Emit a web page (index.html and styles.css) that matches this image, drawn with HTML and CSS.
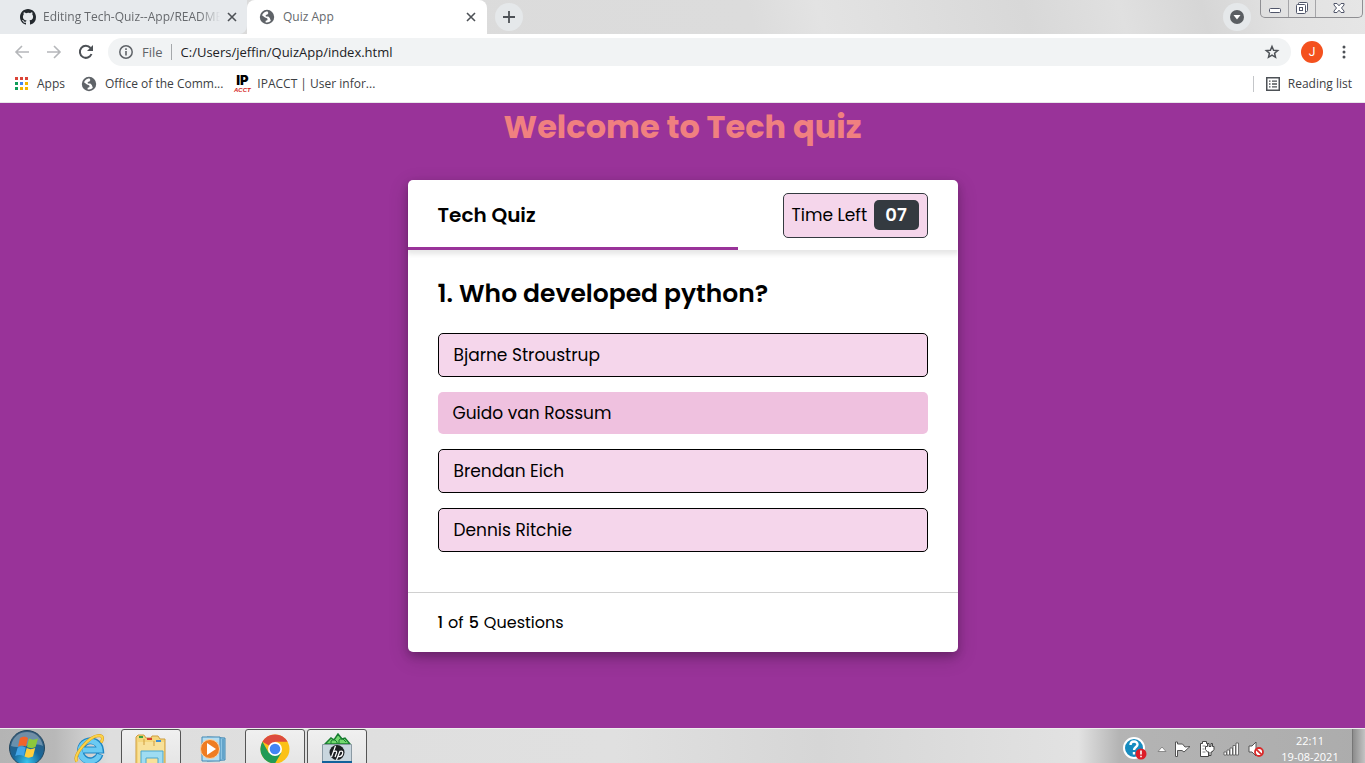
FILE: index.html
```html
<!DOCTYPE html>
<html lang="en">
<head>
<meta charset="utf-8">
<meta name="viewport" content="width=device-width, initial-scale=1">
<title>Quiz App</title>
<link rel="stylesheet" href="styles.css">
</head>
<body>
<svg class="defs" aria-hidden="true">
  <symbol id="globe" viewBox="0 0 16 16"><circle cx="8" cy="8" r="7.2" fill="#5f6368"/><path d="M8.3 2.2c-2.4.4-4.3 1.700-5.300 4L6 8.600c1 .2 1.800.4 2.600 1.300l-.3 1.400-1.600.4-.2 1.500c2 .6 4-.1 5.300-1.400l-1-2.700-1.500-1.600H6.900L6.700 6l1.700-.5 1-1.500z" fill="#fff"/></symbol>
  <symbol id="cross" viewBox="0 0 10 10"><path d="M1 1l8 8M9 1l-8 8" stroke="#4d5156" stroke-width="1.600"/></symbol>
</svg>

<header class="browser">
  <div class="tabs">
    <div class="tab tab-back">
      <svg class="icon16" viewBox="0 0 16 16"><path fill="#24292e" d="M8 0C3.580 0 0 3.580 0 8c0 3.540 2.290 6.530 5.470 7.590.4.070.55-.17.55-.38 0-.19-.01-.82-.01-1.490-2.010.37-2.530-.49-2.690-.94-.09-.23-.48-.94-.82-1.130-.28-.15-.68-.52-.01-.53.63-.01 1.080.58 1.230.82.72 1.210 1.870.87 2.330.66.070-.52.28-.87.51-1.070-1.780-.2-3.640-.89-3.640-3.950 0-.87.31-1.590.82-2.150-.08-.2-.36-1.020.08-2.120 0 0 .67-.21 2.200.82A7.600 7.600 0 0 1 8 3.860c.68 0 1.360.09 2 .27 1.530-1.040 2.200-.82 2.200-.82.44 1.100.16 1.920.08 2.120.51.56.82 1.270.82 2.150 0 3.070-1.870 3.750-3.650 3.950.29.25.54.73.54 1.480 0 1.070-.01 1.930-.01 2.200 0 .21.15.46.55.38A8 8 0 0 0 16 8c0-4.420-3.580-8-8-8z"/></svg>
      <span class="tab-title fade">Editing Tech-Quiz--App/README</span>
      <button class="plain" aria-label="Close tab"><svg class="icon10"><use href="#cross"/></svg></button>
    </div>
    <div class="tab tab-front">
      <svg class="icon16"><use href="#globe"/></svg>
      <span class="tab-title">Quiz App</span>
      <button class="plain" aria-label="Close tab"><svg class="icon10"><use href="#cross"/></svg></button>
    </div>
    <button class="plain round" aria-label="New tab"><svg class="icon14" viewBox="0 0 14 14"><path d="M7 1v12M1 7h12" stroke="#4d5156" stroke-width="1.800"/></svg></button>
    <div class="tabs-end">
      <button class="plain round" aria-label="Search tabs"><svg class="icon14" viewBox="0 0 14 14"><circle cx="7" cy="7" r="7" fill="#5a5e62"/><path d="M3.500 5h7L7 9.500z" fill="#fff"/></svg></button>
      <div class="window-buttons">
        <button class="plain" aria-label="Minimize"><svg width="14" height="14" viewBox="0 0 14 14"><rect x="1.500" y="6.500" width="11" height="4" rx="1" fill="#fff" stroke="#50566a"/></svg></button>
        <button class="plain" aria-label="Restore"><svg width="14" height="14" viewBox="0 0 14 14"><g fill="#fff" stroke="#50566a"><rect x="3.500" y=".5" width="9" height="9" rx="1"/><rect x="1.500" y="2.500" width="9" height="9" rx="1"/><rect x="4.500" y="5.500" width="3" height="3"/></g></svg></button>
        <button class="plain" aria-label="Close"><svg width="14" height="14" viewBox="0 0 14 14"><path d="M2 1.500h3l2 2.300 2-2.300h3V3L9.500 6l2.500 3v1.500H9L7 8.200 5 10.500H2V9l2.500-3L2 3z" fill="#fff" stroke="#50566a"/></svg></button>
      </div>
    </div>
  </div>

  <div class="toolbar">
    <button class="plain" aria-label="Back"><svg class="icon16" viewBox="0 0 16 16"><path d="M15 8H2M8 2L2 8l6 6" fill="none" stroke="#b5b7ba" stroke-width="1.600"/></svg></button>
    <button class="plain" aria-label="Forward"><svg class="icon16" viewBox="0 0 16 16"><path d="M1 8h13M8 2l6 6-6 6" fill="none" stroke="#b5b7ba" stroke-width="1.600"/></svg></button>
    <button class="plain" aria-label="Reload"><svg class="icon16" viewBox="0 0 16 16"><path d="M13.500 10A6 6 0 1 1 12.500 4" fill="none" stroke="#4d5156" stroke-width="2"/><path d="M15 1v6H9z" fill="#4d5156"/></svg></button>
    <div class="address">
      <svg class="icon14" viewBox="0 0 14 14"><circle cx="7" cy="7" r="6.200" fill="none" stroke="#5f6368" stroke-width="1.500"/><path d="M7 6v4.500M7 3.300v1.600" stroke="#5f6368" stroke-width="1.600"/></svg>
      <label class="scheme" for="url">File</label>
      <input id="url" class="url" type="text" value="C:/Users/jeffin/QuizApp/index.html">
      <button class="plain" aria-label="Bookmark"><svg class="icon16" viewBox="0 0 16 16"><path d="M8 2.500l1.600 3.800 4.100.3-3.100 2.700.9 4L8 11.200l-3.500 2.100.9-4-3.100-2.700 4.100-.3z" fill="none" stroke="#4d5156" stroke-width="1.500"/></svg></button>
    </div>
    <button class="plain avatar" aria-label="Profile">J</button>
    <button class="plain" aria-label="Menu"><svg class="icon16" viewBox="0 0 16 16"><g fill="#4d5156"><circle cx="8" cy="3" r="1.500"/><circle cx="8" cy="8" r="1.500"/><circle cx="8" cy="13" r="1.500"/></g></svg></button>
  </div>

  <nav class="bookmarks">
    <a href="#" class="mark"><svg class="icon14" viewBox="0 0 14 14"><path fill="#db4437" d="M0 0h3v3H0zM5 0h3v3H5zM10 0h3v3h-3z"/><path fill="#0f9d58" d="M0 5h3v3H0zM0 10h3v3H0z"/><path fill="#4285f4" d="M5 5h3v3H5z"/><path fill="#f4b400" d="M10 5h3v3h-3zM5 10h3v3H5zM10 10h3v3h-3z"/></svg><span>Apps</span></a>
    <a href="#" class="mark"><svg class="icon16"><use href="#globe"/></svg><span>Office of the Comm...</span></a>
    <a href="#" class="mark ipacct"><span class="ip-logo"><b>IP</b><i>ACCT</i></span><span>IPACCT | User infor...</span></a>
    <a href="#" class="mark reading"><svg class="icon14" viewBox="0 0 14 14"><rect x=".75" y=".75" width="12.500" height="12.500" fill="none" stroke="#4d5156" stroke-width="1.500"/><path d="M3 4.200h1.500M6 4.200h5M3 7h1.500M6 7h5M3 9.800h1.500M6 9.800h5" stroke="#4d5156" stroke-width="1.300"/></svg><span>Reading list</span></a>
  </nav>
</header>

<main class="page">
  <h1 class="welcome">Welcome to Tech quiz</h1>
  <section class="quiz">
    <header class="quiz-head">
      <h2 class="quiz-title">Tech Quiz</h2>
      <div class="timer"><span>Time Left</span><span class="seconds">07</span></div>
      <div class="time-line"></div>
    </header>
    <div class="quiz-body">
      <h3 class="question">1. Who developed python?</h3>
      <div class="options">
        <button class="option">Bjarne Stroustrup</button>
        <button class="option hovered">Guido van Rossum</button>
        <button class="option">Brendan Eich</button>
        <button class="option">Dennis Ritchie</button>
      </div>
    </div>
    <footer class="quiz-foot"><b>1</b><span>of</span><b>5</b><span>Questions</span></footer>
  </section>
</main>

<footer class="taskbar">
  <button class="plain start" aria-label="Start"><svg width="38" height="38" viewBox="0 0 38 38"><defs><radialGradient id="orb" cx=".5" cy=".9" r=".8"><stop offset="0" stop-color="#35c5ee"/><stop offset=".5" stop-color="#17679b"/><stop offset="1" stop-color="#345d7e"/></radialGradient></defs><circle cx="19" cy="19" r="17.500" fill="url(#orb)" stroke="#23465e"/><path d="M3 17C5 7 12 3 19 3s14 4 16 14c-10-5-22 4-32 0z" fill="#fff" opacity=".3"/><path d="M12 9c3-2 6-1.500 8 0l-2 8.500c-3-1.500-5-1.500-8 0z" fill="#f0642b"/><path d="M21 9.500c3 1.500 5 1.500 9 0l-2.500 8.500c-3 1.500-5 1.500-8.500 0z" fill="#8cc83c"/><path d="M9.700 18.500c3-1.500 5-1.500 8 0l-2 8.500c-3-1.500-6-1.500-8.500 0z" fill="#42a5e8"/><path d="M18.700 19c3 1.500 5 1.500 8.500 0L25 27.500c-3 1.500-6 1.500-8.500 0z" fill="#ffce3c"/></svg></button>
  <button class="plain task" aria-label="Internet Explorer"><svg width="32" height="32" viewBox="0 0 32 32"><g fill="none"><path d="M26 21A10 10 0 1 1 26.500 17H9" stroke="#1f86c4" stroke-width="7"/><path d="M25.500 21.500A10 10 0 1 1 26 17H9" stroke="#6bcaf2" stroke-width="5"/><path d="M3 28.500C-2 23 15 3 25 2.500c4.500 0 4 4 2 7" stroke="#d99a14" stroke-width="3"/><path d="M3 28.500C-2 23 15 3 25 2.500c4.500 0 4 4 2 7" stroke="#fbd34a" stroke-width="2"/></g></svg></button>
  <button class="plain task open" aria-label="Explorer"><svg width="34" height="32" viewBox="0 0 34 32"><path d="M2 4l2-2h6l2 3h5l1-2h6l2 3h5v25H2z" fill="#f4d67c" stroke="#cf9d3f"/><path d="M4 9h26v22H4z" fill="#f8e19a"/><path d="M10 6v6M20 8v5" stroke="#cf9d3f"/><path d="M5 3h4v2H5z" fill="#37a044"/><path d="M13 5h5v2h-5z" fill="#d8402d"/><path d="M22 7h5v2h-5z" fill="#3c8ed4"/><path d="M7 32V18h22v14h-5v-7H12v7z" fill="#9edcf2" stroke="#4ba6cd"/></svg></button>
  <button class="plain task" aria-label="Media Player"><svg width="28" height="28" viewBox="0 0 28 28"><path d="M8 2l18 1v22L8 26z" fill="#8cc5e4" stroke="#4389b5"/><path d="M3 2h18v24H3z" fill="#b5def2" stroke="#4389b5"/><path d="M24 4v20" stroke="#3d83b0"/><circle cx="11" cy="14" r="9.500" fill="#ef7d22" stroke="#fbd1a2"/><path d="M8 8l9 6-9 6z" fill="#fff"/></svg></button>
  <button class="plain task open" aria-label="Chrome"><svg width="30" height="30" viewBox="0 0 30 30"><circle cx="15" cy="15" r="14.500" fill="#fbc116"/><path d="M15 15L2.440 7.750A14.500 14.500 0 0 1 27.560 7.750H15z" fill="#dd4b3e"/><path d="M2.440 7.750A14.500 14.500 0 0 0 15 29.500l6.280-10.870L15 15l-6.280 3.630z" fill="#219b55"/><circle cx="15" cy="15" r="7" fill="#fff"/><circle cx="15" cy="15" r="5.300" fill="#4285f4"/></svg></button>
  <button class="plain task open hp" aria-label="HP"><svg width="32" height="32" viewBox="0 0 32 32"><path d="M4 11l6-6 3 2 4-6 4 5 3-1 5 6z" fill="#74d96f" stroke="#187d31" stroke-width="1.500"/><path d="M10 11V8l3-2 3 3v2M18 11V7l3-2 4 4" fill="none" stroke="#187d31"/><path d="M1.500 11.500h29V29h-29z" fill="#c9d6de" stroke="#8b9aa4"/><path d="M1 28h30v4H1z" fill="#11629b"/><circle cx="16" cy="19.500" r="7.500" fill="#1c1f22"/><path d="M14.500 13l-4 11M12.500 18.500c3-1 3.500 0 3 1.500L14 24M19 18l-3.500 9M18.500 18.500c3.500-1 3.500.5 3 2.500s-1.500 3-4.500 2.500" stroke="#fff" stroke-width="1.200" fill="none"/></svg></button>
  <div class="tray">
    <svg class="help" width="24" height="24" viewBox="0 0 24 24"><circle cx="11" cy="11" r="10" fill="#168bbf" stroke="#fff" stroke-width="2"/><path d="M7.500 8c0-4.500 7-4.500 7-.5 0 2.500-3.500 2.500-3.500 5.500M11 15v2.500" fill="none" stroke="#fff" stroke-width="2.400"/><circle cx="18" cy="17" r="5.500" fill="#dc1d28"/><path d="M18 13.500v4M18 18.800v1.500" stroke="#fff" stroke-width="1.600"/></svg>
    <svg width="10" height="16" viewBox="0 0 10 16"><path d="M1 10.500l4-4.500 4 4.500z" fill="#fff" stroke="#777" stroke-width=".8"/></svg>
    <svg width="16" height="16" viewBox="0 0 16 16"><path d="M.5 1v14.500h2V9.500H7l2 1.500 6-5.500-5 .5L7.500 3h-5V1z" fill="#fff" stroke="#555"/></svg>
    <svg width="16" height="16" viewBox="0 0 16 16"><path d="M3.500.5h4v2h2v13h-8v-13h2z" fill="#fff" stroke="#444"/><path d="M3.500 5h3M3.500 8h2M3.500 11h3" stroke="#888"/><path d="M8.500 2.500v3h-2v3l2 2.500h1.500v3.500H12V11h1l2-2.500v-3h-1.500v-3H12v3h-2v-3z" fill="#fff" stroke="#444"/></svg>
    <svg width="17" height="16" viewBox="0 0 17 16"><path d="M1 11h2.500v3H1zM4 9h2.500v5H4zM7 7h2.500v7H7zM10 4.500h2.500V14H10zM13 2h2.500v12H13z" fill="#fff" stroke="#555" stroke-width=".8"/></svg>
    <svg width="16" height="16" viewBox="0 0 16 16"><path d="M1 5h3l4-4v14l-4-4H1z" fill="#fff" stroke="#555"/><circle cx="11" cy="11" r="4" fill="#fff" stroke="#d92a2a" stroke-width="1.800"/><path d="M8.300 8.300l5.400 5.400" stroke="#d92a2a" stroke-width="1.800"/></svg>
  </div>
  <div class="clock"><time>22:11</time><time>19-08-2021</time></div>
  <button class="plain show-desktop" aria-label="Show desktop"></button>
</footer>
</body>
</html>
```

FILE: styles.css
```css
* { box-sizing: border-box; }

body {
  margin: 0;
  height: 100vh;
  display: flex;
  flex-direction: column;
  overflow: hidden;
  font: 12px/16px "Segoe UI", "Open Sans", sans-serif;
  color: #3c4043;
}

svg { display: block; flex: none; }
.defs { position: absolute; width: 0; height: 0; }
.icon16 { width: 16px; height: 16px; }
.icon14 { width: 14px; height: 14px; }
.icon10 { width: 10px; height: 10px; }

.plain {
  display: flex;
  align-items: center;
  justify-content: center;
  flex: none;
  padding: 0;
  border: 0;
  background: none;
  font: inherit;
  color: inherit;
}

/* Browser window */
.browser { flex: none; background: #fff; border-bottom: 1px solid #e8e6ea; }

.tabs {
  display: flex;
  height: 34px;
  background: linear-gradient(75deg, #dadada 0%, #dcdcdc 55%, #e3e3e3 60%, #d8d8d8 75%, #e0e0e0 82%, #d6d6d6 88%, #e2e2e2 94%, #e6e6e6 100%);
}
.tab { display: flex; align-items: center; gap: 8px; padding: 0 10px 0 20px; }
.tab-back { width: 247px; gap: 7px; background: #e7eaed; border-radius: 0 0 8px 0; }
.tab-front { width: 240px; padding: 0 11px 0 12px; background: #fff; border-radius: 8px 8px 0 0; }
.tab-title { flex: 1; overflow: hidden; white-space: nowrap; color: #66696d; }
.fade { mask-image: linear-gradient(to right, #000 88%, transparent); }
.round { width: 28px; height: 28px; margin: 3px 8px; border-radius: 50%; background: #e5e8ea; }
.tabs-end { display: flex; align-items: flex-start; margin-left: auto; }
.window-buttons {
  display: flex;
  height: 18px;
  margin-right: 2px;
  border: 1px solid #8f8f93;
  border-top: 0;
  border-radius: 0 0 5px 5px;
}
.window-buttons .plain { width: 27px; }
.window-buttons .plain + .plain { border-left: 1px solid #a5a5a8; }
.window-buttons .plain:last-child { width: 47px; }
.tabs-end .round { margin-right: 9px; }

.toolbar { display: flex; align-items: center; gap: 16px; height: 36px; padding: 0 13px 0 14px; }
.address {
  display: flex;
  align-items: center;
  flex: 1;
  gap: 9px;
  height: 28px;
  margin: 0 -6px 0 -2px;
  padding: 0 11px;
  border-radius: 14px;
  background: #f1f3f4;
}
.scheme { padding-right: 8px; border-right: 1px solid #a5a8ab; color: #5f6368; }
.scheme, .url { font: 13px/16px "Segoe UI", "Open Sans", sans-serif; }
.url { flex: 1; padding: 0; border: 0; background: none; color: #202124; }
.avatar { width: 22px; height: 22px; border-radius: 50%; background: #f4511e; color: #fff; margin: 0 -3px 0 0; font-family: Roboto, sans-serif; }

.bookmarks { display: flex; align-items: center; gap: 16px; height: 32px; padding: 0 13px 4px 15px; }
.mark { display: flex; align-items: center; gap: 8px; color: inherit; text-decoration: none; white-space: nowrap; }
.ipacct { gap: 7px; margin-left: -5px; }
.ip-logo { display: flex; flex-direction: column; align-items: center; width: 16px; }
.ip-logo b { font: 900 13px/13px Inter, sans-serif; color: #000; }
.ip-logo i { font: italic bold 6px/7px "Liberation Sans", sans-serif; color: #d41920; }
.reading { margin-left: auto; padding-left: 12px; border-left: 1px solid #c4c6c9; }

/* Quiz page */
.page {
  flex: 1;
  min-height: 0;
  display: flex;
  flex-direction: column;
  align-items: center;
  background: #993399;
  color: #000;
  font-family: Poppins, Inter, sans-serif;
}
.welcome { margin: 0 0 29px; font-size: 32px; line-height: 48px; font-weight: 700; color: #f08080; }
.quiz {
  width: 100%;
  max-width: 550px;
  border-radius: 5px;
  background: #fff;
  box-shadow: 0 4px 8px rgba(0, 0, 0, .2), 0 6px 20px rgba(0, 0, 0, .19);
}
.quiz-head {
  position: relative;
  display: flex;
  align-items: center;
  justify-content: space-between;
  height: 70px;
  padding: 0 30px;
  border-radius: 5px 5px 0 0;
  box-shadow: 0 3px 5px 1px rgba(0, 0, 0, .1);
  clip-path: inset(0 0 -10px 0);
}
.quiz-title { margin: 0; font-size: 20px; font-weight: 600; }
.timer {
  display: flex;
  align-items: center;
  justify-content: space-between;
  width: 145px;
  height: 45px;
  padding: 0 8px;
  border: 1px solid #343a40;
  border-radius: 5px;
  background: #f5d6eb;
  font-size: 17px;
}
.seconds {
  width: 45px;
  border-radius: 5px;
  background: #343a40;
  color: #fff;
  font-size: 18px;
  font-weight: 600;
  line-height: 30px;
  text-align: center;
}
.time-line { position: absolute; left: 0; bottom: 0; width: 60%; height: 3px; background: #993399; }

.quiz-body { padding: 25px 30px 40px; }
.question { margin: 0 0 20px; font-size: 25px; line-height: 38px; font-weight: 600; }
.options { display: flex; flex-direction: column; gap: 15px; }
.option {
  height: 44px;
  padding: 0 15px;
  border: 1px solid #000;
  border-radius: 5px;
  background: #f5d6eb;
  color: #000;
  font: 17px/26px Poppins, Inter, sans-serif;
  text-align: left;
}
.hovered { height: 42px; border: 0; background: #efc1df; }
.quiz-foot { display: flex; gap: 5px; height: 60px; padding: 0 30px; border-top: 1px solid #d0d0d0; font-size: 16px; line-height: 60px; }
.quiz-foot b { font-weight: 500; }

/* Desktop taskbar */
.taskbar {
  display: flex;
  flex: none;
  height: 35px;
  overflow: hidden;
  border-top: 1px solid #eee;
  background: linear-gradient(90deg, #b4b4b4 0%, #b8b8b8 4%, #dedede 8%, #e0e0e0 45%, #d6d6d6 60%, #e2e2e2 79%, #b4b4b4 82%, #acacac 100%);
}
.start { width: 54px; height: 38px; }
.task { width: 60px; height: 40px; margin-right: 1px; border-radius: 3px; }
.start + .task { margin: 0 1px 0 6px; }
.open { border: 1px solid #555; background: linear-gradient(#f0f0f0, #e4e4e4); }
.task:nth-child(4) { width: 62px; }
.hp { margin-left: 1px; }
.tray { display: flex; align-items: center; gap: 8px; height: 40px; margin-left: auto; }
.help { margin-right: 2px; }
.clock {
  display: flex;
  flex-direction: column;
  align-items: center;
  width: 84px;
  margin-left: 4px;
  padding-top: 4px;
  font-size: 11px;
  line-height: 16px;
  color: #fff;
}
.show-desktop { width: 13px; border-left: 1px solid #777; background: linear-gradient(90deg, #8c8c8c, #c4c4c4); }
```
